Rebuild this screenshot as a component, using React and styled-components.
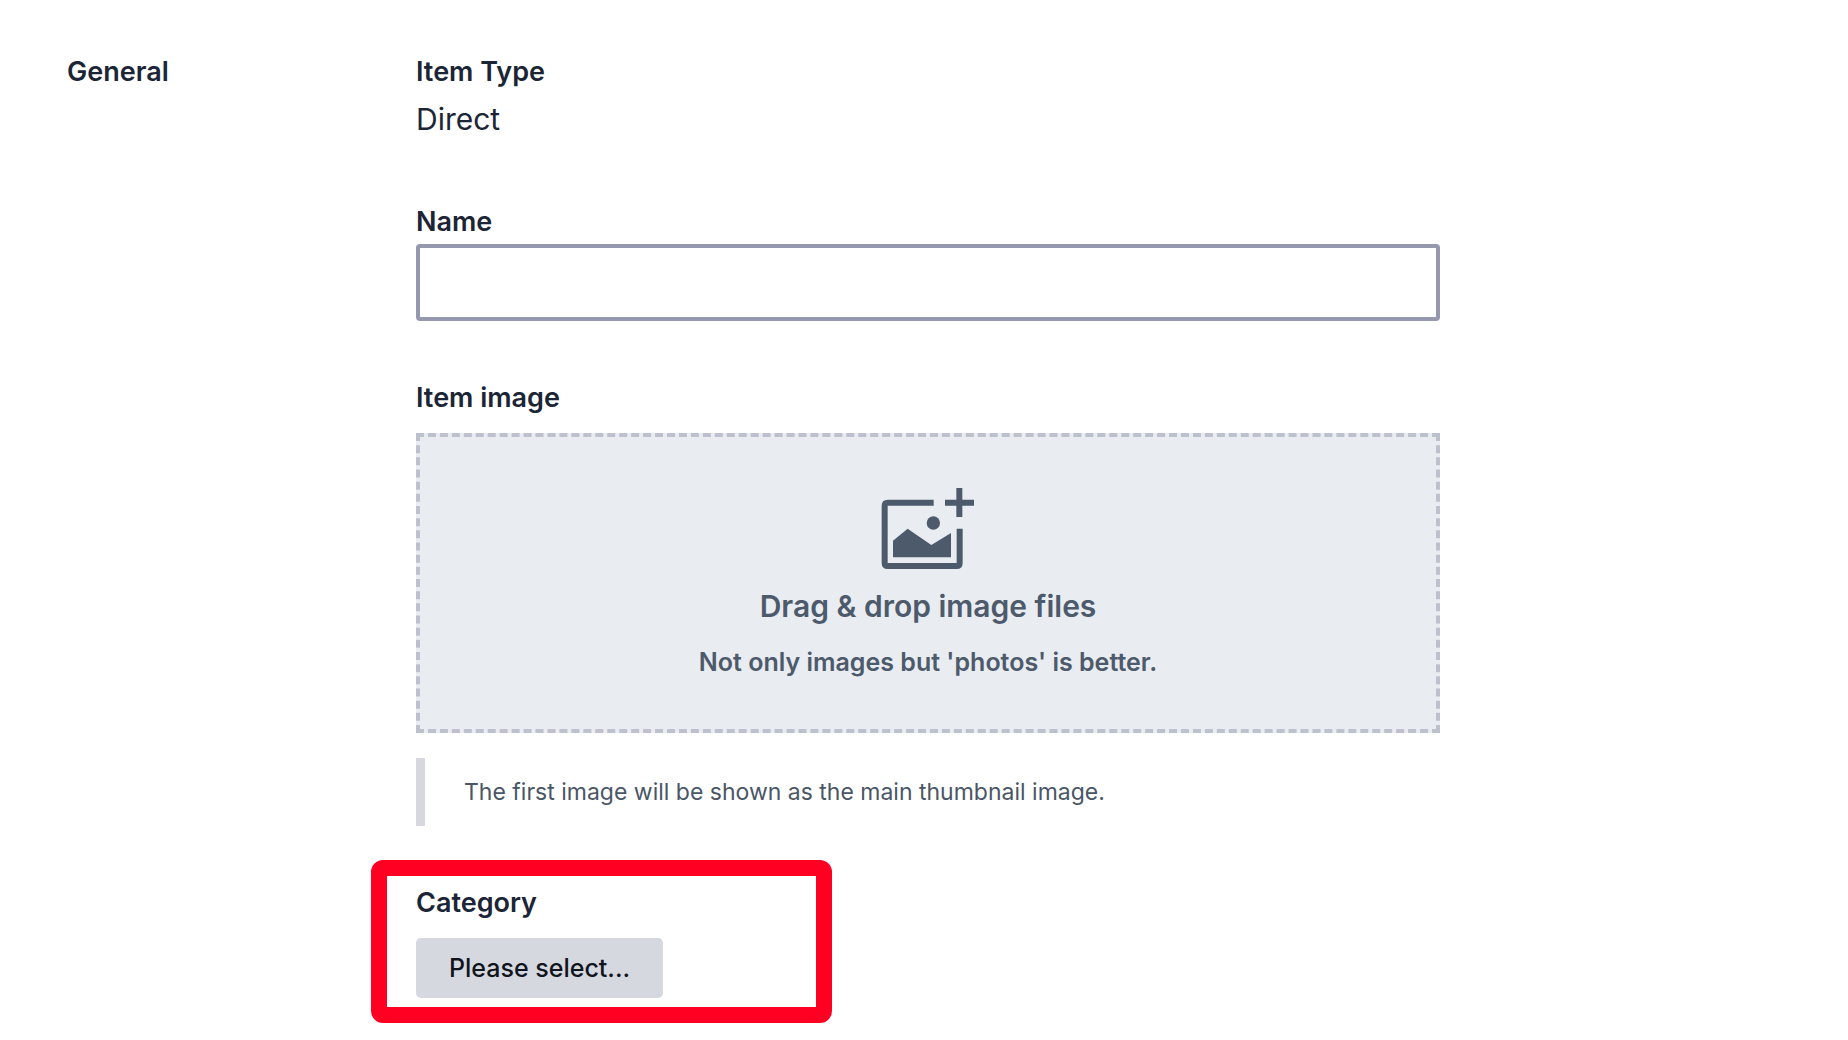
import React from "react";
import styled, { createGlobalStyle } from "styled-components";

const GlobalStyle = createGlobalStyle`
  *, *::before, *::after { box-sizing: border-box; }
  body {
    margin: 0;
    background: #fff;
    color: #1b2536;
    font-family: Inter, "Liberation Sans", sans-serif;
  }
`;

const Page = styled.main`
  display: grid;
  grid-template-columns: 349px minmax(0, 1024px);
  padding: 56px 67px 42px;
`;

const SectionTitle = styled.h2`
  margin: 0;
  font-size: 27px;
  font-weight: 600;
  line-height: 32px;
`;

const Fields = styled.form`
  display: flex;
  flex-direction: column;
  gap: 61px;
`;

const Field = styled.div`
  position: relative;
  display: flex;
  flex-direction: column;
  align-items: stretch;
  gap: ${(p) => (p.$spacious ? "19px" : "6px")};
`;

const Label = styled.label`
  font-size: 27px;
  font-weight: 600;
  line-height: 32px;
`;

const Value = styled.output`
  font-size: 30px;
  line-height: 51px;
`;

const TextInput = styled.input`
  width: 100%;
  height: 77px;
  padding: 0 24px;
  border: 4px solid #9598ae;
  border-radius: 4px;
  outline: none;
  background: #fff;
  color: inherit;
  font: inherit;
  font-size: 30px;
`;

const Upload = styled.div`
  display: flex;
  flex-direction: column;
  gap: 25px;
`;

const DropZone = styled.button`
  display: flex;
  flex-direction: column;
  align-items: center;
  height: 300px;
  padding: 50px 24px 0;
  border: 4px dashed #bcc1cd;
  background: #e9ecf1;
  color: #4c5a6b;
  font: inherit;
  cursor: pointer;
`;

const DropTitle = styled.span`
  margin-top: 18px;
  font-size: 30px;
  font-weight: 600;
  line-height: 36px;
`;

const DropHint = styled.span`
  margin-top: 22px;
  font-size: 25px;
  font-weight: 600;
  line-height: 32px;
`;

const Note = styled.p`
  margin: 0;
  padding: 18px 39px;
  border-left: 9px solid #d5d8de;
  color: #4a5666;
  font-size: 23px;
  line-height: 32px;
`;

const SelectButton = styled.button`
  align-self: flex-start;
  height: 60px;
  padding: 0 33px;
  border: 0;
  border-radius: 5px;
  background: #d6d8e0;
  color: #10141d;
  font: inherit;
  font-size: 25px;
  font-weight: 500;
  cursor: pointer;
`;

const Highlight = styled.div`
  position: absolute;
  top: -27px;
  bottom: -25px;
  left: -45px;
  width: 461px;
  border: 16px solid #ff0022;
  border-radius: 12px;
  pointer-events: none;
`;

function AddImageIcon() {
  return (
    <svg width="94" height="83" viewBox="63 51 282 249" fill="none" aria-hidden="true">
      <path
        d="M221 98H83q-9 0-9 9V279q0 9 9 9H290q9 0 9-9V176"
        stroke="currentColor"
        strokeWidth="18"
      />
      <path d="M298 54V141M255 98H342" stroke="currentColor" strokeWidth="18" />
      <circle cx="220" cy="159" r="20" fill="currentColor" />
      <path d="M99 212L143 176L214 225L273 189V262H99Z" fill="currentColor" />
    </svg>
  );
}

export default function App() {
  return (
    <>
      <GlobalStyle />
      <Page>
        <SectionTitle>General</SectionTitle>
        <Fields onSubmit={(e) => e.preventDefault()}>
          <Field>
            <Label htmlFor="item-type">Item Type</Label>
            <Value id="item-type">Direct</Value>
          </Field>
          <Field>
            <Label htmlFor="item-name">Name</Label>
            <TextInput id="item-name" type="text" />
          </Field>
          <Field $spacious>
            <Label htmlFor="item-image">Item image</Label>
            <Upload>
              <DropZone id="item-image" type="button">
                <AddImageIcon />
                <DropTitle>Drag &amp; drop image files</DropTitle>
                <DropHint>Not only images but 'photos' is better.</DropHint>
              </DropZone>
              <Note>The first image will be shown as the main thumbnail image.</Note>
            </Upload>
          </Field>
          <Field $spacious>
            <Label htmlFor="item-category">Category</Label>
            <SelectButton id="item-category" type="button">
              Please select...
            </SelectButton>
            <Highlight />
          </Field>
        </Fields>
      </Page>
    </>
  );
}
